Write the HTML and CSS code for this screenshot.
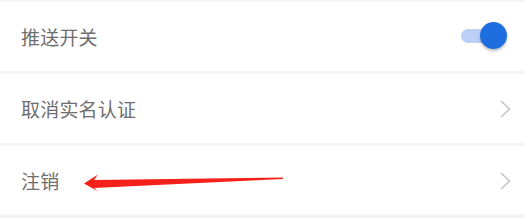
FILE: index.html
```html
<!DOCTYPE html>
<html lang="zh-CN">

<head>
    <meta charset="UTF-8">
    <meta name="viewport" content="width=device-width, initial-scale=1.0">
    <title>设置</title>
    <link rel="stylesheet" href="styles.css">
</head>

<body>
    <div class="list">
        <div class="row">
            <span class="label">推送开关</span>
            <div class="switch">
                <div class="track"></div>
                <div class="knob"></div>
            </div>
        </div>
        <div class="row">
            <span class="label">取消实名认证</span>
            <svg class="chevron" width="11" height="18" viewBox="0 0 11 18">
                <path d="M1 1 L9.5 9 L1 17" fill="none" stroke="#c4c4c4" stroke-width="1.6" />
            </svg>
        </div>
        <div class="row last">
            <span class="label">注销</span>
            <svg class="chevron" width="11" height="18" viewBox="0 0 11 18">
                <path d="M1 1 L9.5 9 L1 17" fill="none" stroke="#c4c4c4" stroke-width="1.6" />
            </svg>
        </div>
    </div>

    <!-- annotation arrow -->
    <svg class="arrow" width="210" height="30" viewBox="0 0 210 30">
        <polygon points="3,13.5 17,4.5 13,10 202,7.4 202,9 13,18 17,21.5" fill="#f5201a" />
    </svg>
</body>

</html>
```

FILE: styles.css
```css
body {
    margin: 0;
    padding: 0;
    background: #f4f4f6;
    font-family: "Noto Sans CJK SC", "Noto Sans", sans-serif;
    position: relative;
}

.list {
    padding-top: 2px;
    display: flex;
    flex-direction: column;
    gap: 3px;
}

.row {
    height: 69px;
    background: #ffffff;
    display: flex;
    align-items: center;
    justify-content: space-between;
    padding: 0 14px 0 21px;
}

.row.last {
    height: 68px;
}

.label {
    font-size: 19px;
    color: #6e6e6e;
    letter-spacing: 0.2px;
}

.switch {
    position: relative;
    width: 46px;
    height: 28px;
    margin-right: 4px;
    margin-top: -2px;
}

.track {
    position: absolute;
    left: 0;
    top: 7px;
    width: 36px;
    height: 14px;
    border-radius: 7px;
    background: #bcd0f7;
}

.knob {
    position: absolute;
    right: 0;
    top: 0;
    width: 27px;
    height: 27px;
    border-radius: 50%;
    background: #1f6ee0;
    box-shadow: 0 2px 3px rgba(0, 0, 0, 0.25);
}

.chevron {
    display: block;
    margin-top: 1px;
}

.arrow {
    position: absolute;
    left: 81px;
    top: 170px;
}
```
